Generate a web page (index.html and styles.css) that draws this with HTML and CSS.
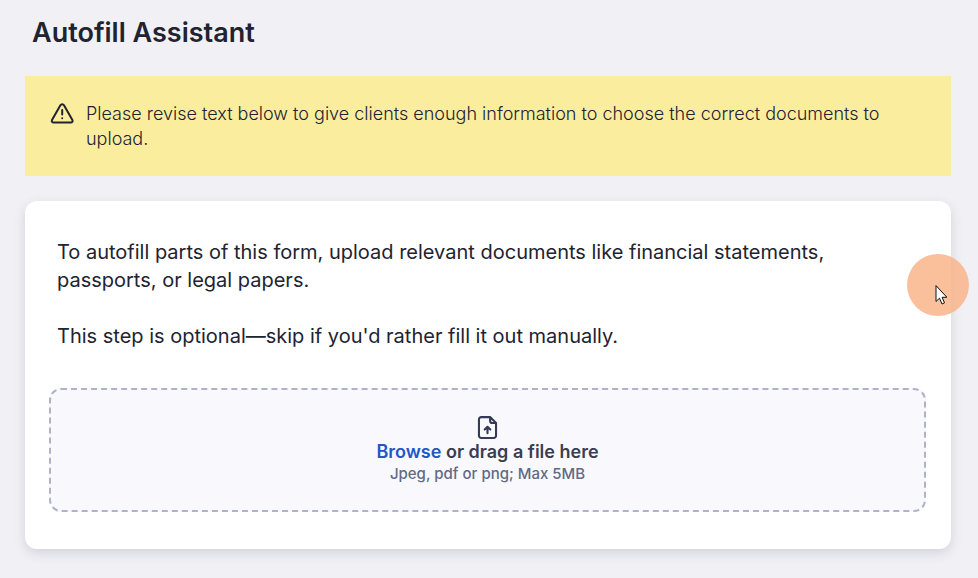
FILE: index.html
```html
<!DOCTYPE html>
<html lang="en">
<head>
<meta charset="utf-8">
<meta name="viewport" content="width=device-width, initial-scale=1">
<title>Autofill Assistant</title>
<link rel="stylesheet" href="styles.css">
</head>
<body>
<main class="page">
  <h1 class="title">Autofill Assistant</h1>
  <div class="notice" role="note">
    <svg class="notice-icon" viewBox="0 0 24 24" aria-hidden="true"><path d="M10.400 4.200 2 19.100a1.700 1.700 0 0 0 1.500 2.500h17.400a1.700 1.700 0 0 0 1.500-2.500L14 4.200a2.100 2.100 0 0 0-3.600 0z"/><path d="M12.200 9v4.500M12.200 17.300h.01"/></svg>
    <p class="notice-text">Please revise text below to give clients enough information to choose the correct documents to upload.</p>
  </div>
  <section class="card">
    <div class="intro">
      <p>To autofill parts of this form, upload relevant documents like financial statements, passports, or legal papers.</p>
      <p>This step is optional—skip if you'd rather fill it out manually.</p>
    </div>
    <div class="dropzone">
      <svg class="file-icon" viewBox="0 0 24 24" aria-hidden="true"><path d="M14.500 2H6a2.200 2.200 0 0 0-2.200 2.200v15.600A2.200 2.200 0 0 0 6 22h12a2.200 2.200 0 0 0 2.200-2.200V7.700zM14.500 2v3.700a2 2 0 0 0 2 2h3.700M12 17.500v-6M9.300 14l2.700-2.700 2.700 2.700"/></svg>
      <p class="drop-label"><button class="browse" type="button">Browse</button> or drag a file here</p>
      <p class="drop-hint">Jpeg, pdf or png; Max 5MB</p>
    </div>
  </section>
</main>
<div class="pointer" aria-hidden="true">
  <svg class="arrow" viewBox="0 0 12 20"><path d="M1 1v15.500l3.500-3.300 2.500 5.800 2.500-1.100-2.400-5.600H11.500z"/></svg>
</div>
</body>
</html>
```

FILE: styles.css
```css
* { box-sizing: border-box; }
body {
  margin: 0;
  background: #f1f1f5;
  color: #212330;
  font-family: Inter, "Liberation Sans", sans-serif;
}
p, h1 { margin: 0; }
.page { padding: 15px 27px 29px 25px; }
.title {
  padding-left: 7px;
  font-size: 27px;
  line-height: 36px;
  font-weight: 600;
}
.notice {
  display: flex;
  gap: 12px;
  margin-top: 25px;
  padding: 25px;
  background: #fbed9e;
}
.notice-icon { flex: none; width: 24px; height: 24px; }
.notice-text { font-size: 18px; line-height: 25px; font-weight: 300; }
svg {
  fill: none;
  stroke: currentColor;
  stroke-width: 2;
  stroke-linecap: round;
  stroke-linejoin: round;
}
.card {
  margin-top: 25px;
  padding: 37px 25px 37px 24px;
  border-radius: 12px;
  background: #fff;
  box-shadow: 0 4px 12px #23253a26;
}
.intro {
  display: grid;
  gap: 28px;
  padding: 0 24px 0 8px;
  font-size: 20px;
  line-height: 28px;
}
.dropzone {
  display: flex;
  flex-direction: column;
  align-items: center;
  margin-top: 38px;
  padding: 25px;
  border: 2px dashed #b0b3c8;
  border-radius: 12px;
  background: #f9f9fd;
}
.file-icon { width: 25px; height: 25px; color: #353a56; }
.drop-label {
  font-size: 18px;
  line-height: 24px;
  font-weight: 600;
  color: #3b3d50;
}
.browse {
  padding: 0;
  border: 0;
  background: none;
  color: #2457c5;
  font: inherit;
  cursor: pointer;
}
.drop-hint {
  padding-bottom: 1px;
  font-size: 15px;
  line-height: 20px;
  font-weight: 500;
  color: #626a86;
}
.pointer {
  position: absolute;
  top: 254px;
  right: 9px;
  width: 62px;
  height: 62px;
  border-radius: 50%;
  background: #f9b48ad9;
}
.arrow {
  position: absolute;
  left: 28px;
  top: 31px;
  width: 12px;
  height: 20px;
  fill: #fff;
  stroke: #111;
  stroke-width: 1;
}
```
